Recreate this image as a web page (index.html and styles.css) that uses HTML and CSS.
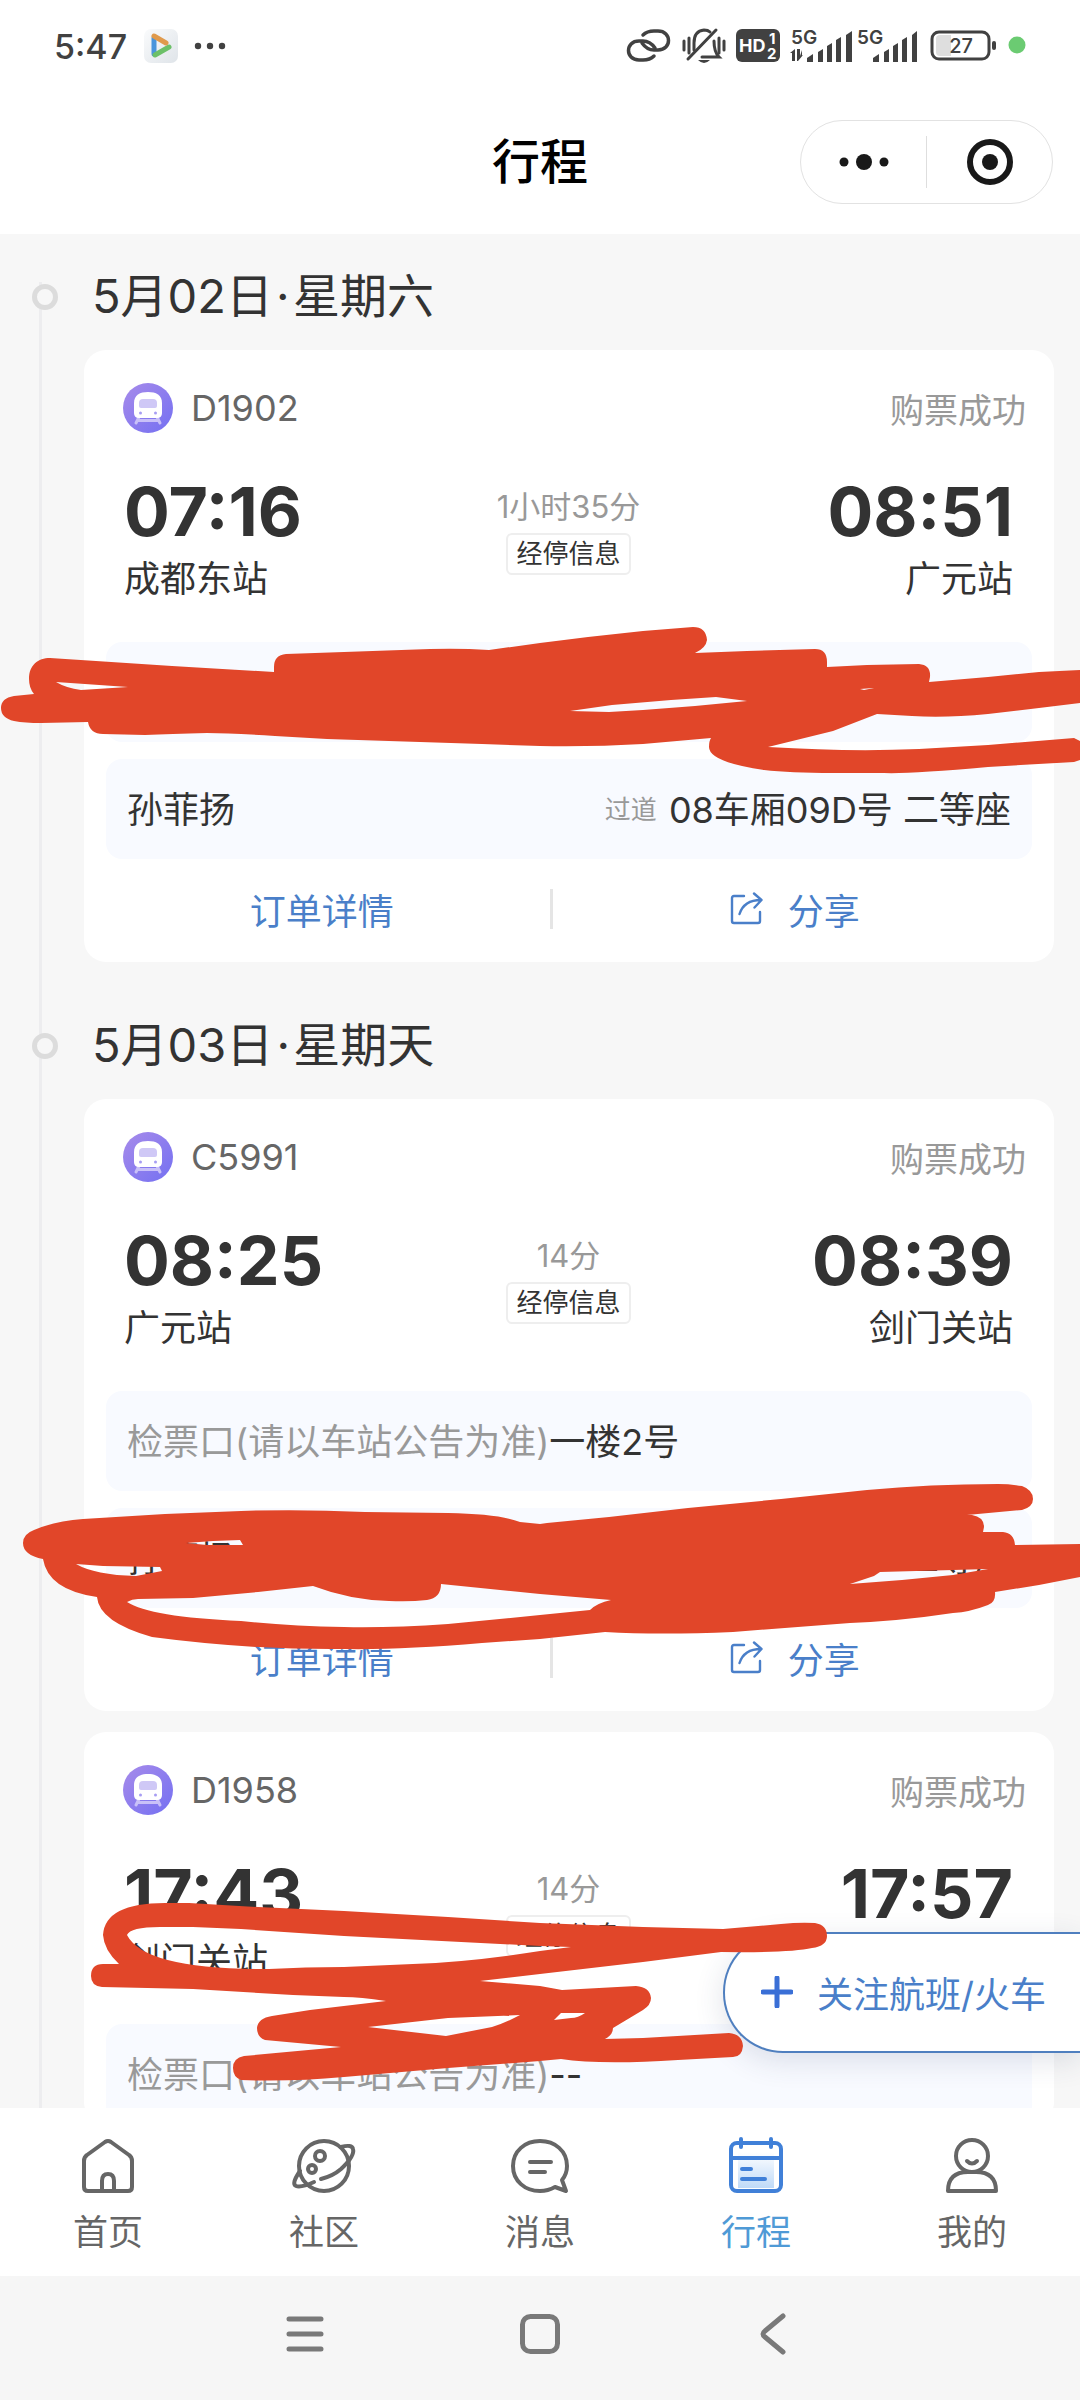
FILE: index.html
```html
<!DOCTYPE html>
<html lang="zh-CN">
<head>
<meta charset="utf-8">
<meta name="viewport" content="width=device-width, initial-scale=1">
<title>行程</title>
<link rel="stylesheet" href="styles.css">
</head>
<body>
<svg class="defs" aria-hidden="true">
  <defs>
    <linearGradient id="violet" x1="0" y1="0" x2="1" y2="1"><stop offset="0" stop-color="#a78bea"/><stop offset="1" stop-color="#7470f2"/></linearGradient>
    <linearGradient id="sky" x1="0" y1="0" x2="0" y2="1"><stop offset="0" stop-color="#fff"/><stop offset="1" stop-color="#bfdaf8"/></linearGradient>
    <linearGradient id="tile" x1="0" y1="0" x2="1" y2="1"><stop offset="0" stop-color="#fafbfc"/><stop offset="1" stop-color="#dfe4e9"/></linearGradient>
    <symbol id="train" viewBox="0 0 50 50">
      <circle cx="25" cy="25" r="25" fill="url(#violet)"/>
      <path d="M16 34l-3 6M34 34l3 6M15 37.500h20" stroke="#c9c1f8" stroke-width="3" stroke-linecap="round"/>
      <path d="M11 20C11 12 17 9 25 9s14 3 14 11v10q0 5-5 5H16q-5 0-5-5z" fill="#fff"/>
      <path d="M16 20q0-4 4-4h10q4 0 4 4v3q0 2-2 2H18q-2 0-2-2z" fill="#cfc8f6"/>
      <circle cx="17.500" cy="30" r="1.500" fill="#a79df3"/><circle cx="32.500" cy="30" r="1.500" fill="#a79df3"/>
    </symbol>
    <symbol id="share" viewBox="0 0 34 34">
      <g fill="none" stroke="#4a7fc9" stroke-width="2.400" stroke-linecap="round" stroke-linejoin="round"><path d="M14 4H4q-2 0-2 2v23q0 2 2 2h24q2 0 2-2V20"/><path d="M9.500 22Q14 8 31 8M24 1.500L31.500 8 24.500 15.500"/></g>
    </symbol>
  </defs>
</svg>
<div class="screen">
  <div class="status">
    <time class="clock">5:47</time>
    <svg class="app-icon" viewBox="0 0 34 34" width="34" height="34"><rect width="34" height="34" rx="7" fill="url(#tile)"/><path d="M10 9V25" stroke="#4a95dc" stroke-width="5" stroke-linecap="round"/><path d="M11 26L25 18" stroke="#6cc068" stroke-width="5" stroke-linecap="round"/><path d="M10 7L22 14" stroke="#e09a4c" stroke-width="5" stroke-linecap="round"/></svg>
    <svg class="more" viewBox="0 0 32 8" width="32" height="8" fill="#414141"><circle cx="4" cy="4" r="3.200"/><circle cx="16" cy="4" r="3.200"/><circle cx="28" cy="4" r="3.200"/></svg>
    <svg class="signals" viewBox="0 0 406 40" width="406" height="40">
      <g fill="none" stroke="#414141" stroke-width="3.500" stroke-linecap="round">
        <path d="M15 9Q19 5 26 5h4c14 0 14 19 0 19h-4Q19 24 14 17"/>
        <path d="M26 30Q22 34 15 34h-4c-14 0-14-19 0-19h4Q22 15 27 22"/>
      </g>
      <g fill="none" stroke="#414141" stroke-width="3" stroke-linecap="round">
        <path d="M56 15v9M61 12v15M91 12v15M96 15v9M60 33L88 4"/>
        <path d="M66 24V17q0-12 10-13 4 0 6 2M74 31h17q-5-5-5-16"/>
      </g>
      <path d="M70 34h12q-6 6-12 0z" fill="#414141"/>
      <rect x="108" y="3" width="44" height="33" rx="6" fill="#414141"/>
      <g fill="#fff" font-family="Inter" font-weight="700"><text x="111" y="26" font-size="18">HD</text><text x="141" y="18" font-size="15">1</text><text x="139" y="33" font-size="15">2</text></g>
      <g fill="#414141"><text class="net" x="163" y="18">5G</text><text class="net" x="229" y="18">5G</text>
        <path d="M162 27l5-4v12h-3v-8zM169 23h3v7l3-1-5 6h-1zM174 24v6h-2z"/>
        <path d="M179 32l6-4v8h-6zM190 26l5-3v13h-5zM199 20l5-3v19h-5zM208 14l5-3v25h-5zM218 9l6-4v31h-6z"/>
        <path d="M245 32l6-4v8h-6zM256 26l5-3v13h-5zM265 20l5-3v19h-5zM274 14l5-3v25h-5zM284 9l5-4v31h-5z"/>
      </g>
      <rect x="304" y="6" width="57" height="27" rx="7" fill="none" stroke="#414141" stroke-width="3"/>
      <path d="M312 9h11v21h-11q-4 0-4-4V13q0-4 4-4z" fill="#dedede"/>
      <rect x="364" y="15" width="4" height="9" rx="2" fill="#414141"/>
      <text x="333" y="27" class="level">27</text>
      <circle cx="389" cy="19" r="8.500" fill="#6bcb72"/>
    </svg>
  </div>

  <header class="topbar">
    <h1>行程</h1>
    <div class="capsule">
      <button aria-label="更多"><svg viewBox="0 0 50 20" width="50" height="20" fill="#191919"><circle cx="5" cy="10" r="4.500"/><circle cx="25" cy="10" r="8"/><circle cx="45" cy="10" r="4.500"/></svg></button>
      <button aria-label="关闭"><svg viewBox="0 0 46 46" width="46" height="46"><circle cx="23" cy="23" r="20" fill="none" stroke="#191919" stroke-width="6"/><circle cx="23" cy="23" r="8" fill="#191919"/></svg></button>
    </div>
  </header>

  <main class="trips">
    <section class="day">
      <h2>5月02日<span class="dot">·</span>星期六</h2>
      <article class="card">
        <div class="card-head"><svg class="train"><use href="#train"/></svg><span class="code">D1902</span><span class="state">购票成功</span></div>
        <div class="route">
          <div class="stop"><time>07:16</time><p>成都东站</p></div>
          <div class="via"><p>1小时35分</p><button>经停信息</button></div>
          <div class="stop end"><time>08:51</time><p>广元站</p></div>
        </div>
        <div class="info"></div>
        <div class="info"><span>孙菲扬</span><span class="seat"><small>过道</small>08车厢09D号 二等座</span></div>
        <div class="actions"><a href="#order">订单详情</a><i></i><a href="#share"><svg class="share"><use href="#share"/></svg>分享</a></div>
      </article>
    </section>
    <section class="day">
      <h2>5月03日<span class="dot">·</span>星期天</h2>
      <article class="card">
        <div class="card-head"><svg class="train"><use href="#train"/></svg><span class="code">C5991</span><span class="state">购票成功</span></div>
        <div class="route">
          <div class="stop"><time>08:25</time><p>广元站</p></div>
          <div class="via"><p>14分</p><button>经停信息</button></div>
          <div class="stop end"><time>08:39</time><p>剑门关站</p></div>
        </div>
        <div class="info"><span><span class="hint">检票口(请以车站公告为准)</span>一楼2号</span></div>
        <div class="info"><span>孙菲扬</span><span class="seat">二等座</span></div>
        <div class="actions"><a href="#order">订单详情</a><i></i><a href="#share"><svg class="share"><use href="#share"/></svg>分享</a></div>
      </article>
      <article class="card">
        <div class="card-head"><svg class="train"><use href="#train"/></svg><span class="code">D1958</span><span class="state">购票成功</span></div>
        <div class="route">
          <div class="stop"><time>17:43</time><p>剑门关站</p></div>
          <div class="via"><p>14分</p><button>经停信息</button></div>
          <div class="stop end"><time>17:57</time></div>
        </div>
        <div class="info"><span><span class="hint">检票口(请以车站公告为准)</span>--</span></div>
      </article>
    </section>
    <button class="follow"><svg viewBox="0 0 32 32" width="32" height="32"><path d="M16 2v28M2 16h28" stroke="#3a6fd6" stroke-width="5" stroke-linecap="round"/></svg>关注航班/火车</button>
  </main>

  <nav class="tabs">
    <a href="#home"><svg viewBox="0 0 64 60"><path d="M8 27q0-4 3-6L29 8q3-2 6 0l18 13q3 2 3 6v26q0 4-4 4H12q-4 0-4-4zM26 57V47q0-7 6-7t6 7v10"/></svg>首页</a>
    <a href="#community"><svg viewBox="0 0 64 60"><circle cx="32" cy="32" r="25"/><circle cx="28" cy="22" r="5"/><circle cx="20" cy="35" r="4"/><path d="M49 13Q60 10 61 15 63 22 49 35 41 42 29 45M8 37Q-1 50 4 52 9 54 22 48"/></svg>社区</a>
    <a href="#messages"><svg viewBox="0 0 64 60"><path d="M47 53Q40 57 32 57C17 57 5 47 5 32S17 7 32 7s27 10 27 25q0 8-5 14l4 11zM22 28h21M22 38h15"/></svg>消息</a>
    <a href="#trips" class="active"><svg viewBox="0 0 64 60"><path d="M14 18h36v36H14z" fill="url(#sky)" stroke="none"/><rect x="7" y="9" width="50" height="48" rx="6"/><path d="M7 24h50M17 5v8M47 5v8M18 35h9M18 45h23"/></svg>行程</a>
    <a href="#me"><svg viewBox="0 0 64 60"><ellipse cx="32" cy="22" rx="16" ry="16"/><path d="M27 27q5 5 10 0M8 57Q8 38 28 38h8q20 0 20 19z"/></svg>我的</a>
  </nav>

  <div class="keys">
    <button aria-label="菜单"><svg viewBox="0 0 42 42"><path d="M4 6h32M4 21h32M4 36h32"/></svg></button>
    <button aria-label="主屏幕"><svg viewBox="0 0 42 42"><rect x="3.500" y="3.500" width="35" height="35" rx="8"/></svg></button>
    <button aria-label="返回"><svg viewBox="0 0 42 42"><path d="M30 3L12 18q-4 3 0 6l18 15"/></svg></button>
  </div>

  <svg class="marks" viewBox="0 0 1080 2400" fill="#e14629" fill-rule="evenodd" aria-hidden="true">
    <path d="M14 696L34 694Q29 688 29 679C29 665 38 658 50 658L96 661 172 666 274 672V667Q274 655 286 654L344 652 430 649Q460 648 489 650L540 643 588 637 643 631 693 627Q706 627 707 640 706 648 695 653L747 651 815 649Q827 649 827 662V667L867 665 919 664Q931 665 930 677L929 682 988 677 1039 672 1080 670V703L1039 708 988 714Q946 718 912 716L877 714 833 731 768 747Q850 752 919 749L988 745 1074 738 1080 741V760L1074 762 988 767Q910 774 884 773H833Q790 773 764 770 709 762 709 747 709 741 711 738L643 744Q592 747 540 746L482 744 327 739 275 736Q230 733 207 733 170 734 145 735L103 734Q90 734 88 722L41 723Q25 723 14 721 1 718 1 708 1 698 14 696ZM56 682L128 687 81 690Q66 688 56 682ZM570 711L612 705 671 700 716 697 747 701 695 706 643 710 609 712ZM860 689L874 688 864 690Z"/>
    <path d="M23 1543Q23 1534 34 1530 55 1521 83 1519L165 1514 241 1511Q300 1509 365 1512L448 1513Q500 1514 520 1522L540 1524 547 1523 609 1517 688 1508 781 1499 867 1490Q930 1484 998 1484 1010 1484 1022 1486 1033 1490 1033 1499 1033 1507 1022 1510L967 1515H972Q984 1517 984 1527L983 1532H1003Q1014 1533 1015 1545L1080 1544V1577L1039 1585 995 1592Q996 1602 988 1605 970 1612 953 1613 900 1621 850 1623L733 1632Q660 1635 605 1632L540 1639 482 1643Q400 1650 344 1649 250 1650 152 1637 99 1622 97 1597 48 1590 43 1559 23 1555 23 1543ZM76 1564L103 1566 160 1567 162 1571 136 1576Q95 1575 76 1564ZM186 1543L213 1541 240 1540 243 1545 207 1545ZM127 1602Q132 1599 138 1599L193 1598 258 1592 313 1586Q350 1600 389 1601 410 1602 427 1600 441 1598 441 1584L540 1594 611 1600Q597 1603 590 1610L540 1615 448 1624Q390 1628 344 1627 290 1626 241 1621 150 1617 127 1602ZM850 1584L874 1576 880 1572 953 1570 988 1569 953 1575 902 1580Z"/>
    <path d="M91 1976Q91 1964 103 1964H119Q104 1950 103 1935 105 1903 165 1903H189L258 1907 344 1911 448 1917 540 1923 643 1927 723 1929 781 1924Q800 1922 815 1923 827 1925 827 1936 827 1946 812 1948 790 1953 721 1952L643 1962 540 1974 480 1981 540 1986 562 1990 636 1986Q650 1987 651 1998 651 2005 643 2010L613 2028Q613 2035 605 2039L643 2038 729 2033Q742 2034 743 2046 742 2057 733 2057L678 2060Q600 2065 561 2059L540 2061 448 2068 344 2077Q290 2082 241 2080 233 2077 233 2068 233 2058 244 2056L341 2047 265 2040Q257 2037 257 2028 258 2018 272 2016L310 2010 386 2001Q360 1997 344 1997L293 1995 193 1989 102 1987Q91 1986 91 1976ZM127 1935Q130 1927 160 1927H193L241 1929 344 1936 540 1946 571 1947 540 1951Q470 1962 413 1964L344 1967Q305 1967 269 1969 145 1970 127 1935ZM368 2027L448 2018 520 2015Q505 2023 492 2027L446 2036ZM554 2020L561 2013H585Q578 2018 571 2018Z"/>
  </svg>
</div>
</body>
</html>
```
FILE: styles.css
```css
*, *::before { box-sizing: border-box; margin: 0; padding: 0; }
body {
  font-family: Inter, "Noto Sans CJK SC", sans-serif;
  font-size: 36px;
  color: #333;
  background: #f7f7f7;
}
button { font: inherit; color: inherit; background: none; border: 0; }
a { color: inherit; text-decoration: none; }
svg { display: block; flex: none; }
.defs { position: absolute; width: 0; height: 0; }

.screen {
  position: relative;
  display: flex;
  flex-direction: column;
  height: 100vh;
  overflow: hidden;
}

/* status bar */
.status {
  display: flex;
  align-items: center;
  height: 92px;
  padding: 0 54px;
  background: #fff;
  color: #414141;
}
.clock { width: 90px; font-size: 34px; font-weight: 500; }
.more { margin-left: 16px; }
.signals { margin-left: auto; margin-right: -8px; overflow: visible; }
.net { font: 600 19px Inter, sans-serif; }
.level { font: 500 20px Inter, sans-serif; text-anchor: middle; fill: #414141; }

/* title bar */
.topbar {
  display: grid;
  grid-template-columns: 1fr auto 1fr;
  align-items: center;
  height: 142px;
  padding: 0 27px 2px;
  background: #fff;
}
h1 { grid-column: 2; font-size: 48px; font-weight: 500; line-height: 64px; color: #000; }
.capsule {
  justify-self: end;
  display: flex;
  align-items: center;
  width: 253px;
  height: 84px;
  border: 1px solid #e2e2e2;
  border-radius: 42px;
}
.capsule button { flex: 1; display: flex; align-items: center; justify-content: center; height: 52px; }
.capsule button + button { border-left: 1px solid #dedede; }

/* trip list */
.trips {
  position: relative;
  flex: 1;
  min-height: 0;
  overflow: hidden;
  padding: 0 26px 0 84px;
}
.trips::before {
  content: "";
  position: absolute;
  top: 48px;
  bottom: 0;
  left: 39px;
  width: 3px;
  background: #ededef;
}
h2 {
  position: relative;
  padding: 30px 0 22px 8px;
  font-size: 47px;
  font-weight: 400;
  line-height: 64px;
}
h2::before {
  content: "";
  position: absolute;
  left: -52px;
  top: 50px;
  width: 26px;
  height: 26px;
  border: 5px solid #dcdcdc;
  border-radius: 50%;
  background: #f7f7f7;
}
.dot { display: inline-block; width: 20px; text-align: center; }
.card {
  margin-bottom: 21px;
  padding: 30px 22px 0;
  background: #fff;
  border-radius: 22px;
}
.card-head { display: flex; align-items: center; height: 58px; padding: 0 6px 2px 17px; color: #666; }
.train { width: 50px; height: 50px; margin-right: 18px; }
.state { margin-left: auto; font-size: 34px; color: #999; }

.route {
  display: grid;
  grid-template-columns: 1fr auto 1fr;
  height: 204px;
  padding: 37px 19px 0 18px;
}
.stop time { display: block; font-size: 68px; font-weight: 700; line-height: 72px; }
.stop p { line-height: 64px; }
.end { text-align: right; }
.via { display: flex; flex-direction: column; align-items: center; padding-top: 12px; }
.via p { font-size: 31px; line-height: 40px; color: #999; }
.via button {
  height: 42px;
  margin-top: 6px;
  padding: 0 8px;
  font-size: 26px;
  line-height: 36px;
  border: 2px solid #eee;
  border-radius: 6px;
}

.info {
  display: flex;
  align-items: center;
  justify-content: space-between;
  height: 100px;
  padding: 0 21px 4px;
  background: #f8faff;
  border-radius: 16px;
}
.info + .info { margin-top: 17px; }
.hint { color: #999; }
.seat { display: flex; align-items: center; gap: 12px; }
.seat small { font-size: 26px; color: #999; }

.actions {
  display: grid;
  grid-template-columns: 16fr 3px 17fr;
  align-items: center;
  height: 103px;
  margin: 0 -5px 0 -12px;
  padding-bottom: 4px;
  color: #4a7fc9;
}
.actions a { display: flex; align-items: center; justify-content: center; gap: 24px; }
.actions i { height: 40px; background: #e5e5e5; }
.share { width: 34px; height: 34px; }

.follow {
  position: absolute;
  right: 0;
  bottom: 55px;
  display: flex;
  align-items: center;
  gap: 24px;
  height: 121px;
  padding: 0 34px 2px 36px;
  color: #4a7fc9;
  background: #fff;
  border: 2px solid #4f7fbf;
  border-right: 0;
  border-radius: 60px 0 0 60px;
  box-shadow: 0 8px 30px rgba(40, 60, 100, .14);
}

/* bottom navigation */
.tabs { display: grid; grid-template-columns: repeat(5, 1fr); height: 168px; background: #fff; color: #666; }
.tabs a { display: flex; flex-direction: column; align-items: center; padding-top: 26px; gap: 12px; font-size: 35px; line-height: 52px; }
.tabs svg { width: 64px; height: 60px; overflow: visible; fill: none; stroke: #666; stroke-width: 4; stroke-linecap: round; stroke-linejoin: round; }
.tabs .active { color: #4f9ad6; }
.tabs .active svg { stroke: #4080d8; }

.keys { display: flex; justify-content: center; align-items: center; gap: 192px; height: 124px; padding-bottom: 8px; background: #f6f6f6; }
.keys svg { width: 42px; height: 42px; fill: none; stroke: #797979; stroke-width: 5; stroke-linecap: round; stroke-linejoin: round; }

/* hand-drawn marker strokes over the list */
.marks { position: absolute; top: 0; left: 0; width: 100%; pointer-events: none; }
```
